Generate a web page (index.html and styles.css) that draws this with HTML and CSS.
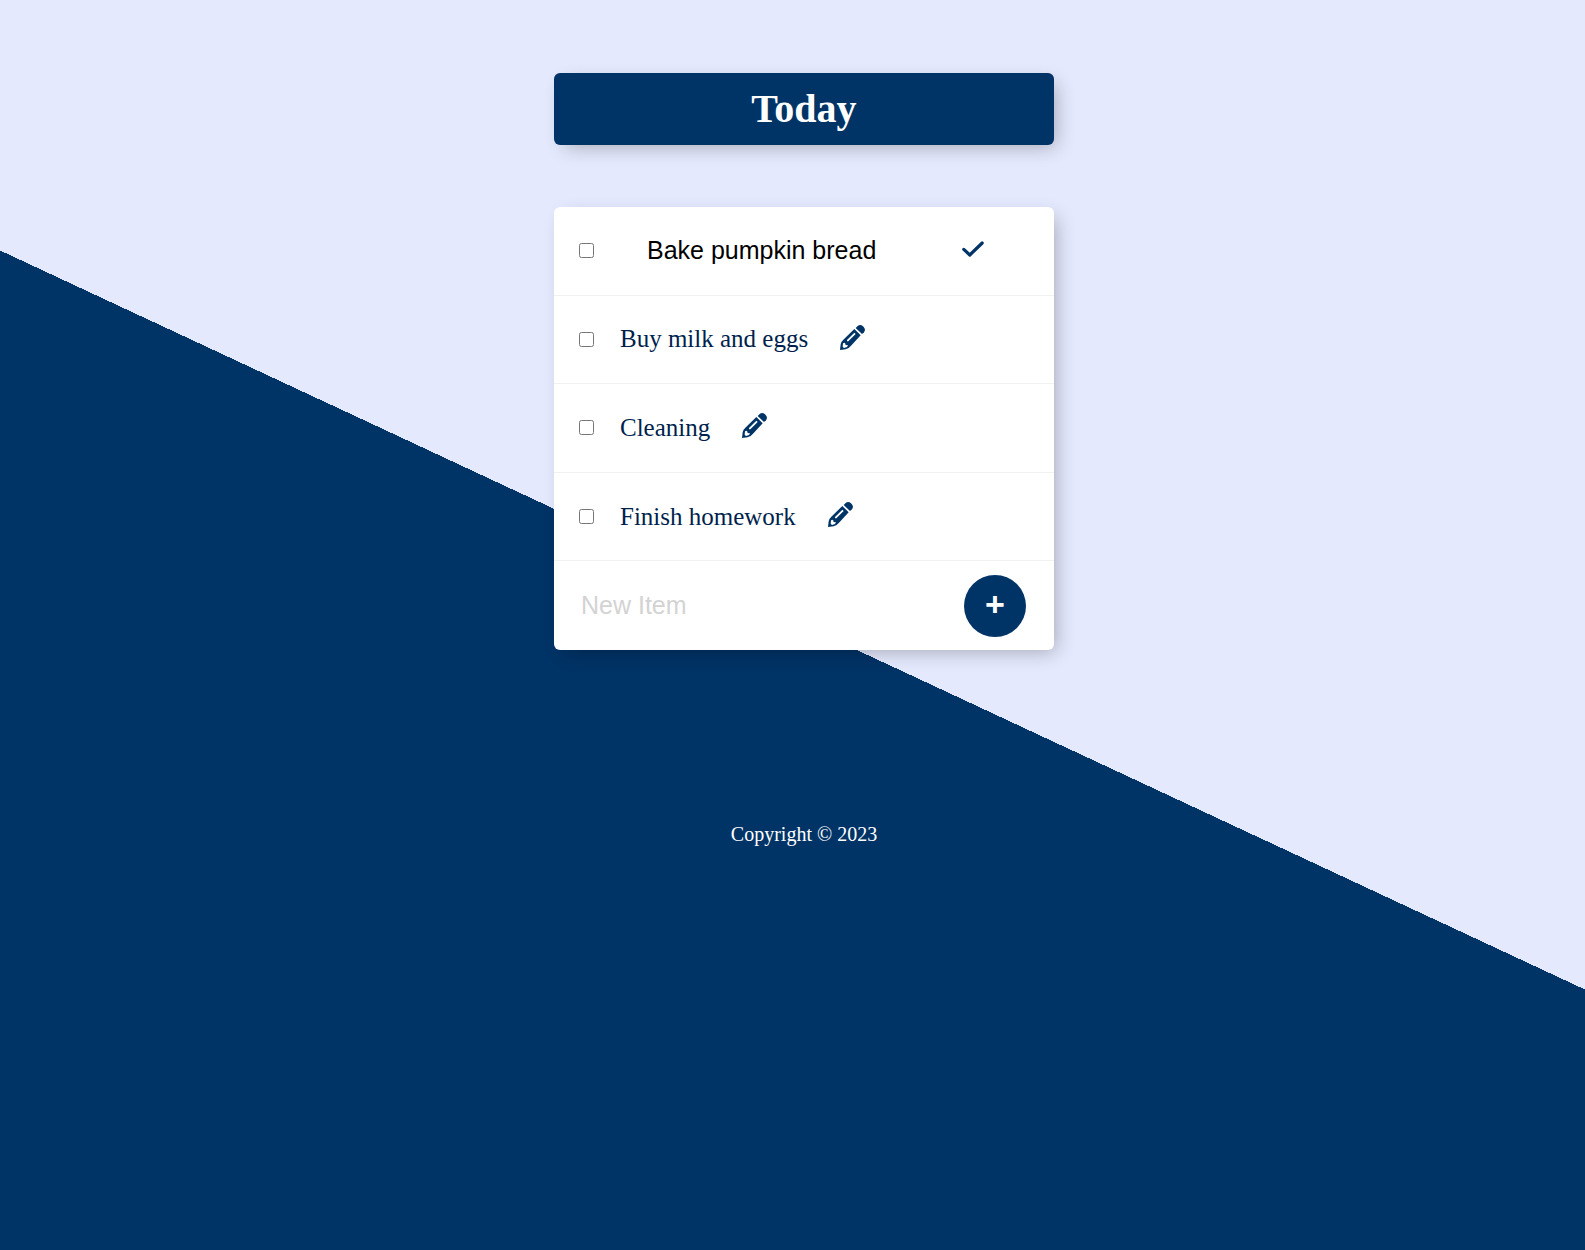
FILE: index.html
```html
<!DOCTYPE html>
<html lang="en">
<head>
<meta charset="utf-8">
<meta name="viewport" content="width=device-width, initial-scale=1">
<title>Today</title>
<link rel="stylesheet" href="styles.css">
</head>
<body>
<svg class="sprite" aria-hidden="true">
  <symbol id="pencil" viewBox="0 0 75 75">
    <path fill-rule="evenodd" d="M0 75 L2 58 Q4 49 10 44 L43 12 L62 31 L33 62 Q27 70 17 72.500 Z M9 55 L8 65 L12 69 L21 66 L24 61 L17 60 L15 53 Z M21 45 L21 49 L25 49 L47 27 L43 23 Z"/>
    <path d="M47 9 L53 3 Q61 -3 69 4 L71 6 Q78 14 72 22 L66 27 Z"/>
  </symbol>
  <symbol id="check" viewBox="0 0 24 18">
    <path d="M2.800 9.400 L8.800 15 L21.200 3" fill="none" stroke="currentColor" stroke-width="3.200" stroke-linecap="round" stroke-linejoin="round"/>
  </symbol>
</svg>
<main class="page">
  <header class="box heading"><h1>Today</h1></header>
  <section class="box list">
    <form class="item">
      <input class="tick" type="checkbox" aria-label="Bake pumpkin bread done">
      <input class="edit" type="text" value="Bake pumpkin bread" aria-label="Edit item">
      <button class="icon-button" type="submit" aria-label="Save"><svg class="check"><use href="#check"/></svg></button>
    </form>
    <div class="item">
      <input class="tick" type="checkbox" id="item-2">
      <label for="item-2">Buy milk and eggs</label>
      <button class="icon-button" type="button" aria-label="Edit"><svg class="pencil"><use href="#pencil"/></svg></button>
    </div>
    <div class="item">
      <input class="tick" type="checkbox" id="item-3">
      <label for="item-3">Cleaning</label>
      <button class="icon-button" type="button" aria-label="Edit"><svg class="pencil"><use href="#pencil"/></svg></button>
    </div>
    <div class="item">
      <input class="tick" type="checkbox" id="item-4">
      <label for="item-4">Finish homework</label>
      <button class="icon-button" type="button" aria-label="Edit"><svg class="pencil"><use href="#pencil"/></svg></button>
    </div>
    <form class="item new-item">
      <input class="new-text" type="text" placeholder="New Item" aria-label="New item">
      <button class="add" type="submit" aria-label="Add">+</button>
    </form>
  </section>
</main>
<footer class="footer">Copyright © 2023</footer>
</body>
</html>
```
FILE: styles.css
```css
* { box-sizing: border-box; }

html { min-height: 100%; background-color: #003366; }

body {
  min-height: 100vh;
  margin: 0;
  padding: 73px 0 0 23px;
  background-image: linear-gradient(205deg, #e4e9fd 50%, #003366 50%);
  background-repeat: no-repeat;
  background-size: 100% calc(100vh - 10px);
  font-family: "Liberation Serif", "Times New Roman", serif;
}

.sprite { display: none; }

.page {
  display: flex;
  flex-direction: column;
  align-items: center;
  gap: 62px;
}

.box {
  width: 100%;
  max-width: 500px;
  border-radius: 6px;
  box-shadow: 6px 6px 20px -5px rgba(0, 0, 0, 0.3);
}

.heading {
  padding: 12px;
  background: #003366;
  color: #fff;
  text-align: center;
}

h1 { margin: 0; font-size: 40px; line-height: 48px; }

.list {
  display: grid;
  grid-auto-rows: 1fr;
  min-height: 443px;
  background: #fff;
}

.item {
  display: flex;
  align-items: center;
  padding: 0 25px;
  border-bottom: 1px solid #f1f1f1;
  color: #001f4d;
}

.new-item { padding: 0 28px 0 27px; border-bottom: 0; }

.tick { width: 15px; height: 15px; margin: 0; }

.item label {
  margin-left: 26px;
  font-size: 25px;
  line-height: 32px;
}

.icon-button {
  display: flex;
  margin-left: 32px;
  padding: 0 0 4px;
  border: 0;
  background: none;
  color: #003366;
}

.pencil { width: 25px; height: 25px; fill: currentColor; }
.check { width: 24px; height: 18px; }

.edit,
.new-text {
  min-width: 0;
  padding: 0 0 2px;
  border: 0;
  outline: 0;
  background: transparent;
  font-family: "Liberation Sans", Arial, sans-serif;
  font-size: 25px;
  line-height: 32px;
}

.edit { width: 282px; margin-left: 53px; color: #000; }
.new-text { flex: 1; }
.new-text::placeholder { color: #d3d3d3; opacity: 1; }

.add {
  width: 62px;
  height: 62px;
  padding: 0 0 2px;
  border: 0;
  border-radius: 50%;
  background: #003366;
  color: #fff;
  font: bold 34px "Liberation Sans", Arial, sans-serif;
}

.footer {
  margin-top: 172px;
  color: #fff;
  font-size: 20px;
  line-height: 24px;
  text-align: center;
}
```
